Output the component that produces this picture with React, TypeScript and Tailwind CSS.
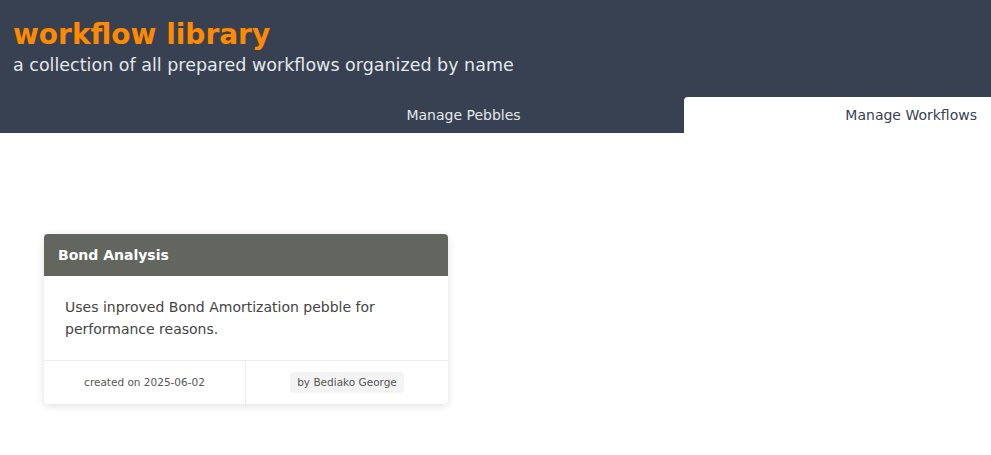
import React from 'react';

const font = { fontFamily: '"DejaVu Sans", Verdana, sans-serif' };

function WorkflowCard() {
  return (
    <div className="w-[404px] rounded-[4px] bg-white shadow-[0_2px_8px_rgba(0,0,0,0.12)] overflow-hidden">
      <div className="h-[42px] bg-[#62665e] px-[14px] flex items-center">
        <span className="text-[14px] font-bold text-white">Bond Analysis</span>
      </div>
      <div className="px-[21px] pt-[20px] pb-[20px] border-b border-[#eceded]">
        <p className="text-[14px] leading-[22px] text-[#444]">
          Uses inproved Bond Amortization pebble for performance reasons.
        </p>
      </div>
      <div className="grid grid-cols-2 h-[43px]">
        <div className="flex items-center justify-center border-r border-[#eceded]">
          <span className="text-[10.5px] text-[#555]">created on 2025-06-02</span>
        </div>
        <div className="flex items-center justify-center">
          <span className="text-[10.5px] text-[#555] bg-[#f3f3f3] rounded-[4px] px-[7px] py-[3px]">
            by Bediako George
          </span>
        </div>
      </div>
    </div>
  );
}

export default function App() {
  return (
    <div className="min-h-[455px] bg-white" style={font}>
      <header className="bg-[#374151]">
        <div className="px-[13px] pt-[16px]">
          <h1 className="text-[28px] leading-[38px] font-bold text-[#ff8a00]">workflow library</h1>
          <p className="text-[17.5px] leading-[22px] text-[#e5e7eb]">
            a collection of all prepared workflows organized by name
          </p>
        </div>
        <nav className="flex justify-end mt-[21px] h-[36px]">
          <button className="w-[441px] text-[14px] text-[#e5e7eb] text-center">Manage Pebbles</button>
          <button className="w-[307px] bg-white rounded-tl-[4px] text-[14px] text-[#374151] text-right pr-[14px]">
            Manage Workflows
          </button>
        </nav>
      </header>
      <main className="pt-[101px] pl-[44px]">
        <WorkflowCard />
      </main>
    </div>
  );
}
